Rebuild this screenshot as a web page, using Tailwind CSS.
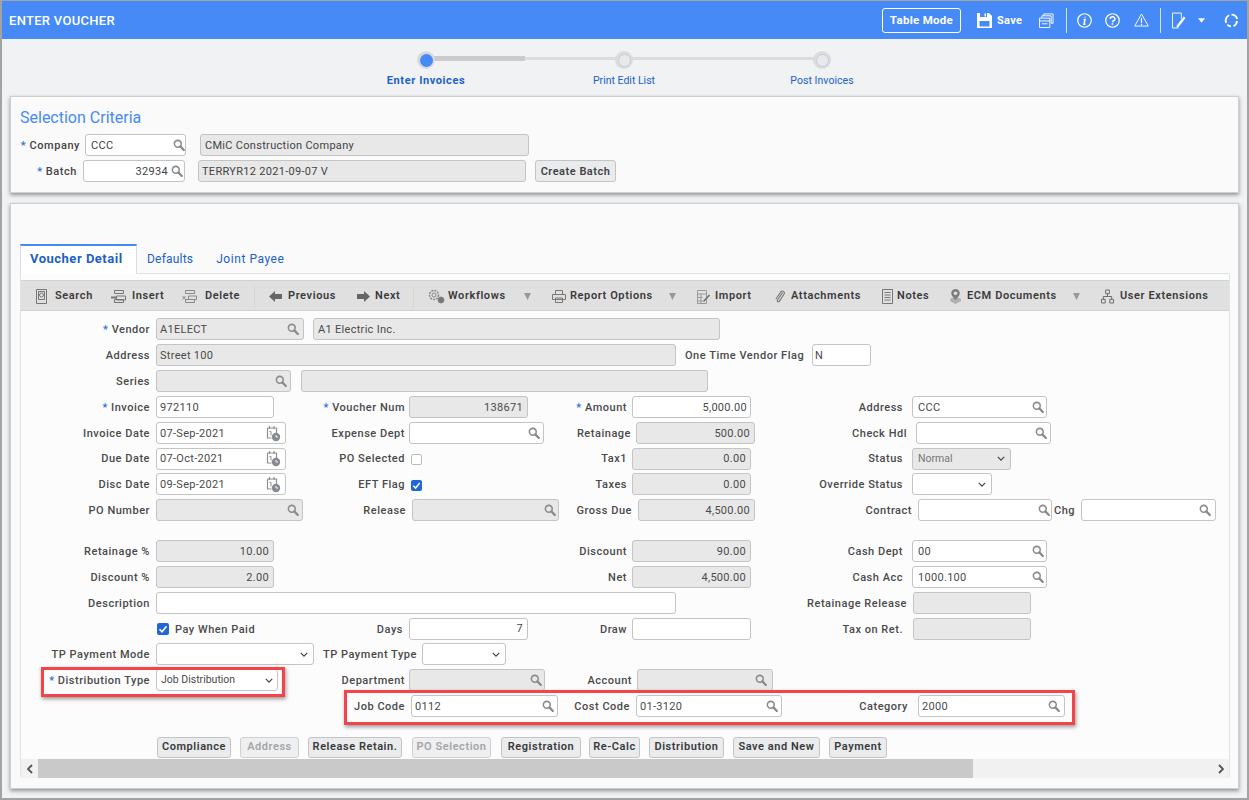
<!DOCTYPE html>
<html lang="en">
<head>
    <meta charset="UTF-8">
    <title>Enter Voucher</title>
    <script src="https://cdn.jsdelivr.net/npm/@tailwindcss/browser@4"></script>
</head>
<body class="overflow-hidden bg-[#f1f2f4]">
    <!-- shared icons -->
    <svg class="hidden">
        <symbol id="search" viewBox="0 0 14 14"><circle cx="5.6" cy="5.6" r="4" fill="none" stroke="#8a8a8a" stroke-width="1.8"/><path d="M8.6 8.6 12.6 12.8" stroke="#8a8a8a" stroke-width="2.6" stroke-linecap="round"/></symbol>
        <symbol id="cal" viewBox="0 0 15 17"><path d="M1.5 3h9v7M1.5 3v10h4M3.5 1v3M8 1v3" fill="none" stroke="#8f8f8f" stroke-width="1.2"/><path d="M3.5 6.500h1.500v4" fill="none" stroke="#8f8f8f"/><circle cx="10" cy="12" r="4.200" fill="#858b90"/><path d="M10 10v2h2" fill="none" stroke="#fff" stroke-width=".9"/></symbol>
        <symbol id="chev" viewBox="0 0 10 6"><path d="M1 1l4 4 4-4" fill="none" stroke="#444" stroke-width="1.500"/></symbol>
        <symbol id="tick" viewBox="0 0 12 12"><path d="M2.500 6.200 5 8.800 9.500 3.200" fill="none" stroke="#fff" stroke-width="1.600"/></symbol>
        <symbol id="caret" viewBox="0 0 9 7"><path d="M1 0h7L4.500 7z" fill="#999"/></symbol>
    </svg>

    <div class="w-[1249px] h-[800px] relative flex flex-col border-x-2 border-b-2 border-t border-[#a3a3a3] text-[11px] tracking-[.3px] text-[#444] font-['Roboto','Liberation_Sans',sans-serif]">
        <!-- top bar -->
        <header class="h-[38px] shrink-0 flex items-center pr-[8px] bg-[#458af7] text-white">
            <h1 class="ml-[7px] pt-[2px] text-[13px] font-medium whitespace-nowrap">ENTER VOUCHER</h1>
            <button class="ml-auto w-[79px] h-[25px] pt-[2px] rounded-[3px] border border-white text-[11.5px] font-bold">Table Mode</button>
            <svg class="ml-[16px] w-[15px] h-[16px]" viewBox="0 0 15 16"><path d="M0 1h12l3 3v12H0z" fill="#fff"/><path d="M3 1h7v4H3z" fill="#458af7"/><path d="M7.500 1.500h1.500v3H7.500z" fill="#fff"/><path d="M2.500 9h10v5.500h-10z" fill="#458af7"/></svg>
            <span class="ml-[5px] w-[25px] pt-[2px] font-bold">Save</span>
            <svg class="ml-[17px] w-[15px] h-[15px]" viewBox="0 0 16 16" fill="none" stroke="#fff"><path d="M5 3V1h10v10h-2M3 5V3h10v8"/><path d="M.5 5.500h11v10H.500z" fill="#458af7"/><path d="M.5 8.500h11M3 11.500h6" /></svg>
            <span class="ml-[12px] w-px h-[25px] bg-[#cfe0fb]"></span>
            <svg class="ml-[10px] w-[15px] h-[15px]" viewBox="0 0 16 16" fill="none" stroke="#fff" stroke-width="1.300"><circle cx="8" cy="8" r="7.200"/><path d="M8.500 4v.9M7 7h1.500l-1 5h1.500" stroke-width="1.600"/></svg>
            <svg class="ml-[13px] w-[15px] h-[15px]" viewBox="0 0 16 16" fill="none" stroke="#fff" stroke-width="1.300"><circle cx="8" cy="8" r="7.200"/><path d="M5.600 6.300c0-3.100 4.900-3.100 4.900 0 0 1.800-2.500 1.900-2.500 3.600M8 11v1.600" stroke-width="1.700"/></svg>
            <svg class="ml-[14px] w-[15px] h-[14px]" viewBox="0 0 16 15" fill="none" stroke="#fff"><path d="M8 1 15.300 14H.7z"/><path d="M8 5v5.500M8 11.500V13" stroke-width="1.400"/></svg>
            <span class="ml-[11px] w-px h-[25px] bg-[#cfe0fb]"></span>
            <svg class="ml-[11px] w-[14px] h-[17px]" viewBox="0 0 15 17" fill="none" stroke="#fff"><path d="M7 16.500H.5V.5h9.500v6"/><path d="M5.500 15.500 13.500 5" stroke-width="2.400"/></svg>
            <svg class="ml-[12px] w-[7px] h-[5px]" viewBox="0 0 9 6"><path d="M0 0h9L4.500 6z" fill="#fff"/></svg>
            <svg class="ml-[19px] w-[15px] h-[15px]" viewBox="0 0 16 16" fill="none" stroke="#fff" stroke-width="2"><path d="M2.300 10.500A6.200 6.200 0 0 1 5.500 2.400M8 1.800a6.200 6.200 0 0 1 6 4.500M13.800 8.500a6.200 6.200 0 0 1-3.700 5.400M7.500 14.200a6.200 6.200 0 0 1-4-1.800"/></svg>
        </header>

        <!-- stepper -->
        <div class="relative h-[57px] shrink-0 flex pl-[325px] pt-[12px] text-center text-[#2060c8] text-[10.5px]">
            <div class="absolute left-[424px] top-[18px] w-[395px] h-[3px] bg-[#dcdcdc]"></div>
            <div class="absolute left-[424px] top-[17px] w-[99px] h-[5px] bg-[#cbcbcb]"></div>
            <div class="relative w-[198px] flex flex-col items-center gap-[4px] text-[11px] tracking-[.6px] font-bold">
                <span class="w-[18px] h-[18px] rounded-full bg-[#d9d9d9] flex items-center justify-center"><span class="w-[13px] h-[13px] rounded-full bg-[#458af7]"></span></span>
                Enter Invoices
            </div>
            <div class="relative w-[198px] flex flex-col items-center gap-[4px] tracking-normal">
                <span class="w-[18px] h-[18px] rounded-full bg-[#dcdcdc] flex items-center justify-center"><span class="w-[13px] h-[13px] rounded-full bg-[#e6eaee] border border-[#c9ccd0]"></span></span>
                Print Edit List
            </div>
            <div class="relative w-[198px] flex flex-col items-center gap-[4px] tracking-[.05px]">
                <span class="w-[18px] h-[18px] rounded-full bg-[#dcdcdc] flex items-center justify-center"><span class="w-[13px] h-[13px] rounded-full bg-[#e6eaee] border border-[#c9ccd0]"></span></span>
                Post Invoices
            </div>
        </div>

        <!-- selection criteria -->
        <section class="ml-[8px] w-[1229px] h-[97px] shrink-0 bg-[#fafafa] border border-[#cfcfcf] shadow-[0_2px_4px_rgba(0,0,0,.4)] pl-[9px] pt-[10px] [&>div>span]:pt-[2px] [&>div>span]:tracking-[.55px] [&>div>div]:pt-[2px] [&_svg]:-mt-[2px]">
            <h2 class="h-[21px] text-[16px] leading-[21px] tracking-normal text-[#458af7]">Selection Criteria</h2>
            <div class="mt-[6px] flex items-center h-[22px]">
                <span class="w-[60px] text-right font-medium"><span class="text-[#2a6fd6]">*</span> Company</span>
                <div class="ml-[5px] w-[101px] h-[22px] flex items-center justify-between pl-[5px] rounded-[3px] border border-[#c4c4c4] bg-white">CCC<svg class="w-[12px] h-[12px]"><use href="#search"/></svg></div>
                <div class="ml-[14px] w-[329px] h-[22px] flex items-center px-[4px] rounded-[3px] border border-[#c4c4c4] bg-[#e8e8e8]">CMiC Construction Company</div>
            </div>
            <div class="mt-[4px] flex items-center h-[22px]">
                <span class="w-[57px] text-right font-medium"><span class="text-[#2a6fd6]">*</span> Batch</span>
                <div class="ml-[6px] w-[102px] h-[22px] flex items-center justify-end gap-[3px] pr-[1px] rounded-[3px] border border-[#c4c4c4] bg-white">32934<svg class="w-[12px] h-[12px]"><use href="#search"/></svg></div>
                <div class="ml-[13px] w-[328px] h-[22px] flex items-center px-[3px] rounded-[3px] border border-[#c4c4c4] bg-[#e8e8e8]">TERRYR12 2021-09-07 V</div>
                <button class="ml-[9px] w-[81px] h-[22px] pt-[2px] rounded-[3px] border border-[#c4c4c4] bg-[#e9ebed] font-semibold tracking-[.5px]">Create Batch</button>
            </div>
        </section>

        <!-- voucher detail -->
        <section class="relative mt-[10px] ml-[8px] w-[1229px] h-[586px] shrink-0 bg-[#fafafa] border border-[#cfcfcf] shadow-[0_2px_4px_rgba(0,0,0,.4)] pl-[9px] pt-[40px]">
            <nav class="relative z-10 h-[30px] flex items-center text-[12px] text-[#2060c8]">
                <span class="w-[117px] h-[30px] flex items-center pl-[9px] pb-[2px] bg-white border-x border-[#d5dee8] border-t-2 border-t-[#458af7] text-[13px] tracking-[.5px] font-bold">Voucher Detail</span>
                <span class="ml-[10px] tracking-[.2px]">Defaults</span>
                <span class="ml-[23px] tracking-[.55px]">Joint Payee</span>
            </nav>
            <div class="w-[1210px] h-[504px] -mt-px border border-[#dde5ec] bg-[#fcfcfc] pt-[6px]">
                <!-- toolbar -->
                <div class="h-[31px] flex items-center pl-[14px] pt-[2px] bg-[#e0e0e0] border-y border-[#d2d2d2] font-semibold tracking-[.6px] text-[#3a3a3a]">
                    <div class="w-[76px] flex items-center gap-[7px]"><svg class="w-[13px] h-[15px]" viewBox="0 0 13 15" fill="none" stroke="#777"><path d="M1.500.5h10v14h-10zM3.500 2.500h6v8h-6z"/><circle cx="6.500" cy="6" r="2"/></svg>Search</div>
                    <div class="w-[71px] flex items-center gap-[6px]"><svg class="w-[15px] h-[13px]" viewBox="0 0 15 13" fill="none" stroke="#777"><path d="M3.500.5h9v3h-9zM5.500 6h9v4h-9zM3.500 9.500h9v3h-9z"/><path d="M0 7.500h6" stroke-width="2"/></svg>Insert</div>
                    <div class="w-[72px] flex items-center gap-[8px]"><svg class="w-[15px] h-[13px]" viewBox="0 0 15 13" fill="none" stroke="#8a8a8a"><path d="M3.500.5h9v3h-9zM6.500 6h8v3.500h-8zM3.500 9.500h9v3h-9zM.500 6l3 3.500M3.500 6l-3 3.500"/></svg>Delete</div>
                    <span class="w-px h-[22px] bg-[#d3d7db] mr-[14px]"></span>
                    <div class="w-[88px] flex items-center gap-[6px]"><svg class="w-[13px] h-[11px]" viewBox="0 0 13 11"><path d="M0 5.500 6 0v3h7v5H6v3z" fill="#666"/></svg>Previous</div>
                    <div class="w-[56px] flex items-center gap-[5px]"><svg class="w-[13px] h-[11px]" viewBox="0 0 13 11"><path d="M13 5.500 7 0v3H0v5h7v3z" fill="#666"/></svg>Next</div>
                    <span class="w-px h-[22px] bg-[#d3d7db] mr-[14px]"></span>
                    <div class="w-[95px] flex items-center gap-[3px]"><svg class="w-[17px] h-[15px]" viewBox="0 0 17 15" fill="none" stroke="#888"><circle cx="6" cy="6" r="4.500" stroke-dasharray="2 1" stroke-width="1.500"/><circle cx="6" cy="6" r="2"/><circle cx="13" cy="11" r="3" fill="#777"/></svg>Workflows</div>
                    <svg class="w-[9px] h-[7px] mr-[20px]"><use href="#caret"/></svg>
                    <div class="w-[116px] flex items-center gap-[4px]"><svg class="w-[14px] h-[13px]" viewBox="0 0 14 13" fill="none" stroke="#777"><path d="M3.500 4V.5h7V4M.5 4.500h13v5h-13zM3.500 8h7v4.500h-7z"/></svg>Report Options</div>
                    <svg class="w-[9px] h-[7px] mr-[20px]"><use href="#caret"/></svg>
                    <div class="w-[77px] flex items-center gap-[5px]"><svg class="w-[13px] h-[14px]" viewBox="0 0 13 14" fill="none" stroke="#999"><path d="M.5.500h9v13h-9zM.5 4h9M.5 7.500h5M.5 11h5M4 4v9.500"/><path d="M6.500 11.500 12.500 5" stroke="#777" stroke-width="1.800"/></svg>Import</div>
                    <div class="w-[108px] flex items-center gap-[6px]"><svg class="w-[11px] h-[15px]" viewBox="0 0 12 15" fill="none" stroke="#777" stroke-width="1.200"><path d="M9.500 3 4 11c-1.500 2 1 3 2 1.500L10.800 5c1.700-2.500-1.600-5-3.400-2.500L2 10.500"/></svg>Attachments</div>
                    <div class="w-[67px] flex items-center gap-[4px]"><svg class="w-[11px] h-[15px]" viewBox="0 0 11 15" fill="none" stroke="#777"><path d="M.5.500h10v14H.500zM2.500 3.500h6M2.500 6h6M2.500 8.500h6M2.500 11h6"/></svg>Notes</div>
                    <div class="w-[123px] flex items-center gap-[5px]"><svg class="w-[13px] h-[15px]" viewBox="0 0 13 15"><path d="M1 10l5.500-2.500L12 10v2l-5.500 3L1 12z" fill="#b0b0b0"/><path d="M6.500 0a4.300 4.300 0 0 1 4.300 4.300C10.800 7 6.500 11 6.500 11S2.200 7 2.200 4.300A4.300 4.300 0 0 1 6.500 0z" fill="#7d7d7d"/><circle cx="6.500" cy="4.300" r="1.800" fill="#e0e0e0"/></svg>ECM Documents</div>
                    <svg class="w-[9px] h-[7px] mr-[20px]"><use href="#caret"/></svg>
                    <div class="flex items-center gap-[6px]"><svg class="w-[13px] h-[15px]" viewBox="0 0 14 15" fill="none" stroke="#666"><path d="M5 .5h4v4H5zM.5 10.500h4v4h-4zM9.500 10.500h4v4h-4zM7 4.500v3M2.500 10.500v-3h9v3"/></svg>User Extensions</div>
                </div>

                <!-- form rows -->
                <div class="pt-[5px] font-medium text-[#4a4a4a] [&>div>span]:pt-[2px] [&>div>span]:tracking-[.52px] [&>div>div]:pt-[2px] [&>div>div>svg]:-mt-[2px]">
                    <div class="flex items-center h-[26px]">
                        <span class="w-[129px] text-right"><span class="text-[#2a6fd6]">*</span> Vendor</span>
                        <div class="ml-[6px] w-[148px] h-[22px] flex items-center justify-between pl-[3px] pr-[4px] rounded-[3px] border border-[#c4c4c4] bg-[#e8e8e8] font-normal">A1ELECT<svg class="w-[12px] h-[12px]"><use href="#search"/></svg></div>
                        <div class="ml-[9px] w-[407px] h-[22px] flex items-center px-[4px] rounded-[3px] border border-[#c4c4c4] bg-[#e8e8e8] font-normal">A1 Electric Inc.</div>
                    </div>
                    <div class="flex items-center h-[26px]">
                        <span class="w-[129px] text-right">Address</span>
                        <div class="ml-[6px] w-[520px] h-[22px] flex items-center px-[3px] rounded-[3px] border border-[#c4c4c4] bg-[#e8e8e8] font-normal">Street 100</div>
                        <span class="ml-[9px] w-[121px] whitespace-nowrap">One Time Vendor Flag</span>
                        <div class="ml-[6px] w-[59px] h-[22px] flex items-center px-[2px] rounded-[3px] border border-[#c4c4c4] bg-white font-normal">N</div>
                    </div>
                    <div class="flex items-center h-[26px]">
                        <span class="w-[129px] text-right">Series</span>
                        <div class="ml-[6px] w-[135px] h-[22px] flex items-center justify-end pr-[3px] rounded-[3px] border border-[#c4c4c4] bg-[#e8e8e8]"><svg class="w-[12px] h-[12px]"><use href="#search"/></svg></div>
                        <div class="ml-[10px] w-[407px] h-[22px] rounded-[3px] border border-[#c4c4c4] bg-[#e8e8e8]"></div>
                    </div>
                    <div class="flex items-center h-[26px]">
                        <span class="w-[129px] text-right"><span class="text-[#2a6fd6]">*</span> Invoice</span>
                        <div class="ml-[6px] w-[118px] h-[22px] flex items-center px-[3px] rounded-[3px] border border-[#c4c4c4] bg-white font-normal">972110</div>
                        <span class="w-[131px] text-right"><span class="text-[#2a6fd6]">*</span> Voucher Num</span>
                        <div class="ml-[4px] w-[119px] h-[22px] flex items-center justify-end px-[4px] rounded-[3px] border border-[#c4c4c4] bg-[#e8e8e8] font-normal">138671</div>
                        <span class="w-[99px] text-right"><span class="text-[#2a6fd6]">*</span> Amount</span>
                        <div class="ml-[5px] w-[119px] h-[22px] flex items-center justify-end px-[3px] rounded-[3px] border border-[#c4c4c4] bg-white font-normal">5,000.00</div>
                        <span class="w-[152px] text-right">Address</span>
                        <div class="ml-[9px] w-[135px] h-[22px] flex items-center justify-between pl-[5px] pr-[2px] rounded-[3px] border border-[#c4c4c4] bg-white font-normal">CCC<svg class="w-[12px] h-[12px]"><use href="#search"/></svg></div>
                    </div>
                    <div class="flex items-center h-[26px]">
                        <span class="w-[129px] text-right">Invoice Date</span>
                        <div class="ml-[6px] w-[130px] h-[22px] flex items-center justify-between pl-[3px] pr-[4px] rounded-[3px] border border-[#c4c4c4] bg-white font-normal">07-Sep-2021<svg class="w-[15px] h-[17px]"><use href="#cal"/></svg></div>
                        <span class="w-[119px] text-right">Expense Dept</span>
                        <div class="ml-[4px] w-[135px] h-[22px] flex items-center justify-end pr-[3px] rounded-[3px] border border-[#c4c4c4] bg-white"><svg class="w-[12px] h-[12px]"><use href="#search"/></svg></div>
                        <span class="w-[87px] text-right">Retainage</span>
                        <div class="ml-[5px] w-[119px] h-[22px] flex items-center justify-end px-[4px] rounded-[3px] border border-[#c4c4c4] bg-[#e8e8e8] font-normal">500.00</div>
                        <span class="w-[152px] text-right">Check Hdl</span>
                        <div class="ml-[9px] w-[135px] h-[22px] flex items-center justify-end pr-[3px] rounded-[3px] border border-[#c4c4c4] bg-white"><svg class="w-[12px] h-[12px]"><use href="#search"/></svg></div>
                    </div>
                    <div class="flex items-center h-[25px]">
                        <span class="w-[129px] text-right">Due Date</span>
                        <div class="ml-[6px] w-[130px] h-[22px] flex items-center justify-between pl-[3px] pr-[4px] rounded-[3px] border border-[#c4c4c4] bg-white font-normal">07-Oct-2021<svg class="w-[15px] h-[17px]"><use href="#cal"/></svg></div>
                        <span class="w-[119px] text-right">PO Selected</span>
                        <span class="ml-[6px] w-[11px] h-[11px] mt-[2px] rounded-[2px] border border-[#bbb] bg-white"></span>
                        <span class="w-[205px] text-right">Tax1</span>
                        <div class="ml-[5px] w-[119px] h-[22px] flex items-center justify-end px-[4px] rounded-[3px] border border-[#c4c4c4] bg-[#e8e8e8] font-normal">0.00</div>
                        <span class="w-[152px] text-right">Status</span>
                        <div class="ml-[9px] w-[99px] h-[22px] flex items-center justify-between px-[5px] !pt-0 rounded-[3px] border border-[#c4c4c4] bg-[#e8e8e8] font-normal text-[10.5px] tracking-normal text-[#777]">Normal<svg class="w-[8px] h-[5px] !mt-0"><use href="#chev"/></svg></div>
                    </div>
                    <div class="flex items-center h-[26px]">
                        <span class="w-[129px] text-right">Disc Date</span>
                        <div class="ml-[6px] w-[130px] h-[22px] flex items-center justify-between pl-[3px] pr-[4px] rounded-[3px] border border-[#c4c4c4] bg-white font-normal">09-Sep-2021<svg class="w-[15px] h-[17px]"><use href="#cal"/></svg></div>
                        <span class="w-[119px] text-right">EFT Flag</span>
                        <span class="ml-[6px] w-[11px] h-[11px] mt-[2px] !pt-0 rounded-[2px] bg-[#1f66d8] flex items-center justify-center"><svg class="w-[11px] h-[11px]"><use href="#tick"/></svg></span>
                        <span class="w-[205px] text-right">Taxes</span>
                        <div class="ml-[5px] w-[119px] h-[22px] flex items-center justify-end px-[4px] rounded-[3px] border border-[#c4c4c4] bg-[#e8e8e8] font-normal">0.00</div>
                        <span class="w-[152px] text-right">Override Status</span>
                        <div class="ml-[9px] w-[80px] h-[22px] flex items-center justify-end px-[5px] rounded-[3px] border border-[#c4c4c4] bg-white"><svg class="w-[8px] h-[5px]"><use href="#chev"/></svg></div>
                    </div>
                    <div class="flex items-center h-[26px]">
                        <span class="w-[129px] text-right">PO Number</span>
                        <div class="ml-[6px] w-[147px] h-[22px] flex items-center justify-end pr-[3px] rounded-[3px] border border-[#c4c4c4] bg-[#e8e8e8]"><svg class="w-[12px] h-[12px]"><use href="#search"/></svg></div>
                        <span class="w-[103px] text-right">Release</span>
                        <div class="ml-[6px] w-[147px] h-[22px] flex items-center justify-end pr-[2px] rounded-[3px] border border-[#c4c4c4] bg-[#e8e8e8]"><svg class="w-[12px] h-[12px]"><use href="#search"/></svg></div>
                        <span class="w-[73px] text-right">Gross Due</span>
                        <div class="ml-[6px] w-[117px] h-[22px] flex items-center justify-end px-[4px] rounded-[3px] border border-[#c4c4c4] bg-[#e8e8e8] font-normal">4,500.00</div>
                        <span class="w-[157px] text-right">Contract</span>
                        <div class="ml-[6px] w-[134px] h-[22px] flex items-center justify-end pr-[1px] rounded-[3px] border border-[#c4c4c4] bg-white"><svg class="w-[12px] h-[12px]"><use href="#search"/></svg></div>
                        <span class="ml-[2px] w-[22px]">Chg</span>
                        <div class="ml-[5px] w-[135px] h-[22px] flex items-center justify-end pr-[4px] rounded-[3px] border border-[#c4c4c4] bg-white"><svg class="w-[12px] h-[12px]"><use href="#search"/></svg></div>
                    </div>
                    <div class="mt-[15px] flex items-center h-[26px]">
                        <span class="w-[129px] text-right">Retainage %</span>
                        <div class="ml-[6px] w-[118px] h-[22px] flex items-center justify-end px-[4px] rounded-[3px] border border-[#c4c4c4] bg-[#e8e8e8] font-normal">10.00</div>
                        <span class="w-[353px] text-right">Discount</span>
                        <div class="ml-[5px] w-[119px] h-[22px] flex items-center justify-end px-[4px] rounded-[3px] border border-[#c4c4c4] bg-[#e8e8e8] font-normal">90.00</div>
                        <span class="w-[152px] text-right">Cash Dept</span>
                        <div class="ml-[9px] w-[135px] h-[22px] flex items-center justify-between pl-[5px] pr-[2px] rounded-[3px] border border-[#c4c4c4] bg-white font-normal">00<svg class="w-[12px] h-[12px]"><use href="#search"/></svg></div>
                    </div>
                    <div class="flex items-center h-[26px]">
                        <span class="w-[129px] text-right">Discount %</span>
                        <div class="ml-[6px] w-[118px] h-[22px] flex items-center justify-end px-[4px] rounded-[3px] border border-[#c4c4c4] bg-[#e8e8e8] font-normal">2.00</div>
                        <span class="w-[353px] text-right">Net</span>
                        <div class="ml-[5px] w-[119px] h-[22px] flex items-center justify-end px-[4px] rounded-[3px] border border-[#c4c4c4] bg-[#e8e8e8] font-normal">4,500.00</div>
                        <span class="w-[152px] text-right">Cash Acc</span>
                        <div class="ml-[9px] w-[135px] h-[22px] flex items-center justify-between pl-[5px] pr-[2px] rounded-[3px] border border-[#c4c4c4] bg-white font-normal">1000.100<svg class="w-[12px] h-[12px]"><use href="#search"/></svg></div>
                    </div>
                    <div class="flex items-center h-[26px]">
                        <span class="w-[129px] text-right">Description</span>
                        <div class="ml-[6px] w-[520px] h-[22px] rounded-[3px] border border-[#c4c4c4] bg-white"></div>
                        <span class="w-[231px] text-right">Retainage Release</span>
                        <div class="ml-[6px] w-[118px] h-[22px] rounded-[3px] border border-[#c4c4c4] bg-[#e8e8e8]"></div>
                    </div>
                    <div class="flex items-center h-[25px] pl-[136px]">
                        <span class="w-[12px] h-[12px] !pt-0 rounded-[2px] bg-[#1f66d8] flex items-center justify-center"><svg class="w-[12px] h-[12px]"><use href="#tick"/></svg></span>
                        <span class="ml-[6px] w-[79px] !pt-[4px] whitespace-nowrap">Pay When Paid</span>
                        <span class="w-[149px] !pt-[4px] text-right">Days</span>
                        <div class="ml-[6px] w-[119px] h-[22px] flex items-center justify-end px-[4px] rounded-[3px] border border-[#c4c4c4] bg-white font-normal">7</div>
                        <span class="w-[99px] !pt-[4px] text-right">Draw</span>
                        <div class="ml-[5px] w-[119px] h-[22px] rounded-[3px] border border-[#c4c4c4] bg-white"></div>
                        <span class="w-[152px] !pt-[4px] text-right">Tax on Ret.</span>
                        <div class="ml-[10px] w-[118px] h-[22px] rounded-[3px] border border-[#c4c4c4] bg-[#e8e8e8]"></div>
                    </div>
                    <div class="flex items-center h-[26px]">
                        <span class="w-[129px] text-right whitespace-nowrap">TP Payment Mode</span>
                        <div class="ml-[6px] w-[158px] h-[22px] flex items-center justify-end px-[5px] rounded-[3px] border border-[#c4c4c4] bg-white"><svg class="w-[8px] h-[5px]"><use href="#chev"/></svg></div>
                        <span class="ml-[9px] w-[93px] whitespace-nowrap">TP Payment Type</span>
                        <div class="ml-[6px] w-[84px] h-[22px] flex items-center justify-end px-[5px] rounded-[3px] border border-[#c4c4c4] bg-white"><svg class="w-[8px] h-[5px]"><use href="#chev"/></svg></div>
                    </div>
                    <div class="flex items-center h-[26px]">
                        <span class="w-[129px] text-right"><span class="text-[#2a6fd6]">*</span> Distribution Type</span>
                        <div class="ml-[6px] w-[122px] h-[22px] flex items-center justify-between px-[4px] !pt-0 rounded-[3px] border border-[#c4c4c4] bg-white font-normal text-[10.5px] tracking-normal">Job Distribution<svg class="w-[8px] h-[5px] !mt-0"><use href="#chev"/></svg></div>
                        <span class="w-[127px] text-right">Department</span>
                        <div class="ml-[4px] w-[136px] h-[22px] flex items-center justify-end pr-[2px] rounded-[3px] border border-[#c4c4c4] bg-[#e8e8e8]"><svg class="w-[12px] h-[12px]"><use href="#search"/></svg></div>
                        <span class="w-[87px] text-right">Account</span>
                        <div class="ml-[5px] w-[136px] h-[22px] flex items-center justify-end pr-[5px] rounded-[3px] border border-[#c4c4c4] bg-[#e8e8e8]"><svg class="w-[12px] h-[12px]"><use href="#search"/></svg></div>
                    </div>
                    <div class="flex items-center h-[26px]">
                        <span class="w-[384px] text-right">Job Code</span>
                        <div class="ml-[6px] w-[147px] h-[22px] flex items-center justify-between pl-[3px] pr-[3px] rounded-[3px] border border-[#c4c4c4] bg-white font-normal">0112<svg class="w-[12px] h-[12px]"><use href="#search"/></svg></div>
                        <span class="w-[72px] text-right">Cost Code</span>
                        <div class="ml-[6px] w-[146px] h-[22px] flex items-center justify-between pl-[3px] pr-[3px] rounded-[3px] border border-[#c4c4c4] bg-white font-normal">01-3120<svg class="w-[12px] h-[12px]"><use href="#search"/></svg></div>
                        <span class="w-[126px] text-right">Category</span>
                        <div class="ml-[10px] w-[147px] h-[22px] flex items-center justify-between pl-[3px] pr-[4px] rounded-[3px] border border-[#c4c4c4] bg-white font-normal">2000<svg class="w-[12px] h-[12px]"><use href="#search"/></svg></div>
                    </div>
                    <!-- action buttons -->
                    <div class="mt-[17px] flex items-center h-[22px] pl-[136px] font-semibold tracking-[.55px] text-[#3a3a3a]">
                        <button class="w-[74px] h-[21px] rounded-[3px] border border-[#c4c4c4] bg-[#e9ebed]">Compliance</button>
                        <button class="ml-[9px] w-[59px] h-[21px] rounded-[3px] border border-[#d0d0d0] bg-[#eeeff1] text-[#a5a5a5]">Address</button>
                        <button class="ml-[9px] w-[94px] h-[21px] rounded-[3px] border border-[#c4c4c4] bg-[#e9ebed]">Release Retain.</button>
                        <button class="ml-[10px] w-[79px] h-[21px] rounded-[3px] border border-[#d0d0d0] bg-[#eeeff1] text-[#a5a5a5]">PO Selection</button>
                        <button class="ml-[10px] w-[80px] h-[21px] rounded-[3px] border border-[#c4c4c4] bg-[#e9ebed]">Registration</button>
                        <button class="ml-[8px] w-[51px] h-[21px] rounded-[3px] border border-[#c4c4c4] bg-[#e9ebed]">Re-Calc</button>
                        <button class="ml-[9px] w-[75px] h-[21px] rounded-[3px] border border-[#c4c4c4] bg-[#e9ebed]">Distribution</button>
                        <button class="ml-[9px] w-[87px] h-[21px] rounded-[3px] border border-[#c4c4c4] bg-[#e9ebed]">Save and New</button>
                        <button class="ml-[9px] w-[58px] h-[21px] rounded-[3px] border border-[#c4c4c4] bg-[#e9ebed]">Payment</button>
                    </div>
                </div>
                <!-- scrollbar -->
                <div class="mt-px h-[19px] flex items-center bg-[#f1f1f1]">
                    <span class="w-[17px] flex justify-center"><svg class="w-[6px] h-[10px]" viewBox="0 0 6 10"><path d="M5 1 1 5l4 4" fill="none" stroke="#555" stroke-width="1.800"/></svg></span>
                    <span class="w-[935px] h-[19px] bg-[#c9c9c9]"></span>
                    <span class="ml-auto w-[17px] flex justify-center"><svg class="w-[6px] h-[10px]" viewBox="0 0 6 10"><path d="M1 1l4 4-4 4" fill="none" stroke="#555" stroke-width="1.800"/></svg></span>
                </div>
            </div>

            <!-- red callouts over the form -->
            <div class="absolute left-[30px] top-[463px] w-[244px] h-[30px] border-[3px] border-[#f4434a] shadow-[1px_2px_4px_rgba(0,0,0,.4)] pointer-events-none"></div>
            <div class="absolute left-[333px] top-[486px] w-[731px] h-[35px] border-[3px] border-[#f4434a] shadow-[1px_2px_4px_rgba(0,0,0,.4)] pointer-events-none"></div>
        </section>
    </div>
</body>
</html>
